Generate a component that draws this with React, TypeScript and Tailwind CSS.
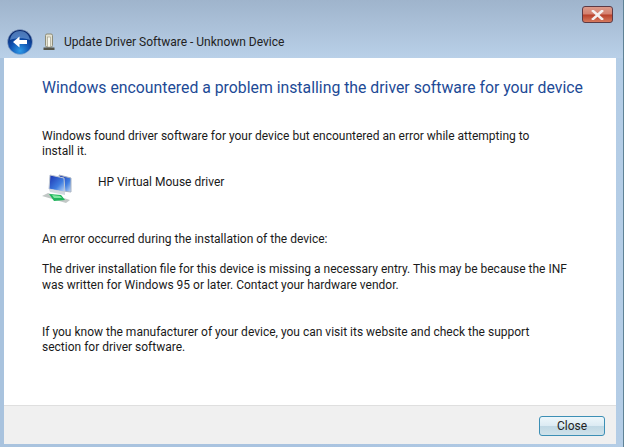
const font = "font-['Roboto','Noto_Sans',sans-serif]";

function BackButton() {
  return (
    <svg width="26" height="26" viewBox="0 0 26 26" className="shrink-0">
      <defs>
        <radialGradient id="orb" cx="50%" cy="85%" r="75%">
          <stop offset="0%" stopColor="#2f9be8" />
          <stop offset="55%" stopColor="#0f4fae" />
          <stop offset="100%" stopColor="#0a2a6e" />
        </radialGradient>
      </defs>
      <circle cx="13" cy="13" r="12.5" fill="url(#orb)" stroke="#9db4d0" strokeWidth="0.6" />
      <path d="M3 11 C4 5 8 2 13 2 C18 2 22 5 23 11 C18 8.5 8 8.5 3 11Z" fill="#6f9fdc" opacity="0.65" />
      <path d="M6 13 L12.5 7.5 V11 H20 V15 H12.5 V18.5Z" fill="#ffffff" />
    </svg>
  );
}

function DeviceIcon() {
  return (
    <svg width="12" height="18" viewBox="0 0 12 18" className="shrink-0">
      <rect x="2.5" y="1" width="7" height="13" rx="1.5" fill="#e4e2d2" stroke="#8d8c78" />
      <rect x="4.5" y="4" width="3" height="10" fill="#f8f8ee" stroke="#a3a28f" strokeWidth="0.7" />
      <rect x="0.5" y="14.5" width="11" height="2.5" fill="#55554a" />
    </svg>
  );
}

function NetworkIcon() {
  return (
    <svg width="34" height="34" viewBox="0 0 34 34">
      <defs>
        <linearGradient id="screen" x1="0" y1="0" x2="1" y2="1">
          <stop offset="0%" stopColor="#1a2fae" />
          <stop offset="60%" stopColor="#3f7de0" />
          <stop offset="100%" stopColor="#c7dcf5" />
        </linearGradient>
      </defs>
      <path d="M17 3 L29 6 V20 L21 19Z" fill="url(#screen)" stroke="#a9b3c2" />
      <path d="M8 3 L22 6 L23 20 L7 17Z" fill="url(#screen)" stroke="#c0c8d4" />
      <path d="M7 17 L23 20 L23 23 L8 20Z" fill="#d4d9e0" />
      <path d="M0 24 L6 21 L28 28 L24 31Z" fill="#c2c8c6" />
      <path d="M7 22 L19 23 L23 28 L12 29Z" fill="#1fb55c" />
      <path d="M10 23 L18 24 L20 26 L12 26Z" fill="#7fe6a0" />
    </svg>
  );
}

function CloseCaption() {
  return (
    <div className="flex h-[17px] w-[31px] items-center justify-center rounded-[3px] border border-[#5c3a45] bg-[linear-gradient(#dc9a8a_0%,#d4806f_48%,#b8402a_52%,#d67a5e_100%)]">
      <svg width="13" height="10" viewBox="0 0 13 10">
        <path d="M2 1 L11 9 M11 1 L2 9" stroke="#f4f1f1" strokeWidth="2.6" strokeLinecap="square" />
      </svg>
    </div>
  );
}

export default function App() {
  return (
    <div className={`${font} flex h-[447px] w-[624px] flex-col overflow-hidden border-r border-[#5f8296] bg-[linear-gradient(90deg,#a9c3de_0%,#a9c3e0_50%,#b4cde6_100%)] text-[12px] text-[#1a1a1a]`}>
      <div className="flex h-[58px] shrink-0 flex-col bg-[linear-gradient(#9fb4cc_0%,#b9d0e8_100%)] pr-[10px] pl-[7px]">
        <div className="flex justify-end pt-[6px]">
          <CloseCaption />
        </div>
        <div className="mt-[6px] flex items-center">
          <BackButton />
          <div className="ml-[10px]"><DeviceIcon /></div>
          <span className="ml-[9px] text-[12px] text-[#222]">Update Driver Software - Unknown Device</span>
        </div>
      </div>

      <div className="mr-[7px] ml-[4px] flex flex-1 flex-col">
        <div className="flex-1 bg-white pt-[19px] pl-[38px] pr-[20px]">
          <h1 className="text-[15.8px] leading-[22px] font-normal whitespace-nowrap text-[#1d4a96]">
            Windows encountered a problem installing the driver software for your device
          </h1>
          <p className="mt-[30px] leading-[15px]">
            Windows found driver software for your device but encountered an error while attempting to
            <br />
            install it.
          </p>
          <div className="mt-[16px] flex">
            <div className="-mt-[3px] w-[56px] shrink-0"><NetworkIcon /></div>
            <span className="leading-[15px]">HP Virtual Mouse driver</span>
          </div>
          <p className="mt-[26px] leading-[15px]">An error occurred during the installation of the device:</p>
          <p className="mt-[14px] leading-[16px]">
            The driver installation file for this device is missing a necessary entry. This may be because the INF
            <br />
            was written for Windows 95 or later. Contact your hardware vendor.
          </p>
          <p className="mt-[32px] leading-[15px]">
            If you know the manufacturer of your device, you can visit its website and check the support
            <br />
            section for driver software.
          </p>
        </div>
        <div className="flex h-[39px] shrink-0 items-center justify-end border-t border-[#dfdfdf] bg-[#f0f0f0] pr-[11px] pt-[2px]">
          <button className="h-[20px] w-[66px] rounded-[3px] border border-[#3c8fb5] bg-[linear-gradient(#eef7fb_0%,#dcebf3_48%,#c0d8e4_52%,#cfe2ea_100%)] text-[12px] leading-none text-[#222]">
            Close
          </button>
        </div>
      </div>
      <div className="h-[3px] shrink-0" />
    </div>
  );
}
